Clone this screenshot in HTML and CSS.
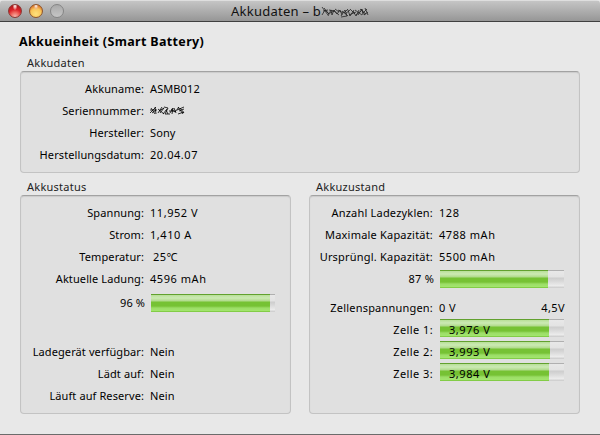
FILE: index.html
```html
<!DOCTYPE html>
<html lang="de">
<head>
<meta charset="utf-8">
<title>Akkudaten</title>
<link rel="stylesheet" href="styles.css">
</head>
<body>
<div class="window">
  <header class="titlebar">
    <div class="lights">
      <span class="light red"></span><span class="light yellow"></span><span class="light gray"></span>
    </div>
    <div class="title"><span>Akkudaten – b</span><svg class="scribble" width="48" height="12" viewBox="0 0 48 12"><path d="M1 1l3 4l3 4M1 9l3-5l4 4M3 2l5 6M2 5l5-1M7 10l3-6l1 5M8 4l6 1M9 7l4-2M11 9l2-5l3 4M13 5l5 4M14 3l4 3M16 8l3-4l2 5M17 4l5 3M20 10l4-6l2 6M20 11l6-1M21 5l6 5M23 7l4-4M24 8l5-4M27 4l2 6l4-6M28 9l7-3M29 3l5 5M32 5l3 5l3-6M34 4l7 5M35 9l5-4M37 9l4-6l1 6M39 3l6 5M40 3l4 6M42 7l4-4M43 9l4-3M44 2l3 7"/></svg></div>
  </header>
  <main class="content">
    <h1>Akkueinheit (Smart Battery)</h1>
    <section class="group data">
      <h2>Akkudaten</h2>
      <div class="panel">
        <div class="row"><span class="label">Akkuname:</span><span>ASMB012</span></div>
        <div class="row"><span class="label">Seriennummer:</span><svg class="scribble serial" width="37" height="12" viewBox="0 0 37 12"><path d="M1 8l6-6M2 3l4 6M1 5h7M3 8l4-3M6 2l1 7M9 8l4-6M9 4l6 5M10 6l5-3M11 8l4-5M15 2l4 1l-3 6h5M17 5l2 4M14 9l4-5M21 8l3-5l-1 6M20 6h7M22 4l4 3M25 3l2 5M26 7l4-5M29 2l5 7M28 5l7-3M29 9l6-2M31 3l4 5M30 6l5-2"/></svg></div>
        <div class="row"><span class="label">Hersteller:</span><span>Sony</span></div>
        <div class="row"><span class="label">Herstellungsdatum:</span><span class="number">20.04.07</span></div>
      </div>
    </section>
    <div class="columns">
      <section class="group status">
        <h2>Akkustatus</h2>
        <div class="panel">
          <div class="row"><span class="label">Spannung:</span><span class="number">11,952 V</span></div>
          <div class="row"><span class="label">Strom:</span><span class="number">1,410 A</span></div>
          <div class="row"><span class="label">Temperatur:</span><span class="number temp">25℃</span></div>
          <div class="row"><span class="label">Aktuelle Ladung:</span><span class="number">4596 mAh</span></div>
          <div class="row charge"><span class="label percent">96 %</span><div class="bar"><div class="fill" style="width:119px"></div></div></div>
          <div class="row"><span class="label">Ladegerät verfügbar:</span><span>Nein</span></div>
          <div class="row"><span class="label">Lädt auf:</span><span>Nein</span></div>
          <div class="row"><span class="label">Läuft auf Reserve:</span><span>Nein</span></div>
        </div>
      </section>
      <section class="group health">
        <h2>Akkuzustand</h2>
        <div class="panel">
          <div class="row"><span class="label">Anzahl Ladezyklen:</span><span class="number">128</span></div>
          <div class="row"><span class="label">Maximale Kapazität:</span><span class="number">4788 mAh</span></div>
          <div class="row"><span class="label">Ursprüngl. Kapazität:</span><span class="number">5500 mAh</span></div>
          <div class="row capacity"><span class="label percent">87 %</span><div class="bar"><div class="fill" style="width:108px"></div></div></div>
          <div class="row"><span class="label">Zellenspannungen:</span><span class="scale"><span>0 V</span><span>4,5V</span></span></div>
          <div class="row cell"><span class="label">Zelle 1:</span><div class="bar"><div class="fill number" style="width:109px">3,976 V</div></div></div>
          <div class="row cell"><span class="label">Zelle 2:</span><div class="bar"><div class="fill number" style="width:110px">3,993 V</div></div></div>
          <div class="row cell"><span class="label">Zelle 3:</span><div class="bar"><div class="fill number" style="width:109px">3,984 V</div></div></div>
        </div>
      </section>
    </div>
  </main>
</div>
</body>
</html>
```
FILE: styles.css
```css
* { box-sizing: border-box; }
body {
  margin: 0;
  font: 11px/22px "Noto Sans", "Open Sans", sans-serif;
  letter-spacing: .1px;
  color: #000;
  background: #ccc;
}
.window {
  height: 435px;
  background: #e8e8e8;
  border-bottom: 1px solid #6b6b6b;
  overflow: hidden;
}
.titlebar {
  display: grid;
  grid-template-columns: 231px 1fr;
  height: 22px;
  background: linear-gradient(#dedede 0, #dedede 1px, #c5c5c5 1px, #969696 21px);
  border-bottom: 1px solid #404040;
  border-radius: 4px 4px 0 0;
}
.lights { display: flex; gap: 7px; padding: 4px 0 0 8px; }
.light {
  width: 14px;
  height: 14px;
  border-radius: 50%;
  border: 1px solid #777;
}
.red {
  border-color: #8a3934;
  background: radial-gradient(ellipse at 50% 8%, #fff 0, #f0a09b 14%, transparent 28%), radial-gradient(circle at 50% 95%, #f6b6ac 0, #f06a60 30%, #dc2228 55%, #951816 100%);
}
.yellow {
  border-color: #8e552c;
  background: radial-gradient(ellipse at 50% 8%, #fff 0, #efb78d 14%, transparent 28%), radial-gradient(circle at 50% 75%, #ffe17c 0, #f9c65a 50%, #df8131 75%, #a94515 100%);
}
.gray { border-color: #858585; background: linear-gradient(#a9a9a9, #c6c6c6); }
.title {
  display: flex;
  font-size: 13px;
  line-height: 22px;
  letter-spacing: .25px;
  color: #111;
  white-space: nowrap;
}
.scribble { margin-top: 6px; fill: none; stroke: #252525; stroke-width: .8; }
.serial { margin: 5px 0 0 -1px; stroke: #000; }
.content { padding: 10px 20px 0; }
h1 {
  margin: 0 0 0 -1px;
  font-size: 12.5px;
  line-height: 20px;
  font-weight: 700;
  letter-spacing: .35px;
}
h2 {
  margin: 0;
  padding-left: 7px;
  font-size: 11px;
  font-weight: 400;
  line-height: 16px;
  letter-spacing: .25px;
  color: #222;
}
.data { padding-top: 3px; }
.panel {
  border: 1px solid #c3c3c3;
  border-top: 1px solid #a2a2a2;
  border-radius: 4px;
  background: #e0e0e0;
  box-shadow: inset 0 1px 1px #cbcbcb;
  padding-top: 6px;
}
.data .panel { height: 102px; }
.columns { display: flex; justify-content: space-between; padding-top: 6px; }
.columns .panel { height: 219px; }
.status { width: 271px; }
.health { width: 271px; }
.row {
  display: grid;
  grid-template-columns: 123px 1fr;
  column-gap: 6px;
  height: 22px;
  white-space: nowrap;
}
.label { text-align: right; }
.health .label { letter-spacing: .2px; }
.health .cell .label { letter-spacing: .4px; }
.number { letter-spacing: .55px; }
.temp { padding-left: 3px; }
.charge { height: 51px; padding-top: 2px; }
.capacity { height: 29px; }
.bar {
  width: 124px;
  height: 18px;
  margin: 2px 0 0 1px;
  background: linear-gradient(#b0b0b0 0, #b0b0b0 1px, #e8e8e8 1px, #e3e3e3 7px, #cdcdcd 8px, #d8d8d8 11px, #ededed 16px, #d0d0d0 17px);
}
.cell .bar { margin-top: 0; }
.fill {
  height: 18px;
  padding-left: 9px;
  line-height: 22px;
  background: linear-gradient(#62a12f 0, #62a12f 1px, #b8df98 1px, #cceab4 4px, #b0da8b 7px, #76c234 8px, #76c234 12px, #9cdd67 14px, #a2e66d 17px, #83cc47 17px);
}
.percent { margin-right: -1px; }
.scale { display: flex; justify-content: space-between; width: 126px; letter-spacing: .4px; }
```
